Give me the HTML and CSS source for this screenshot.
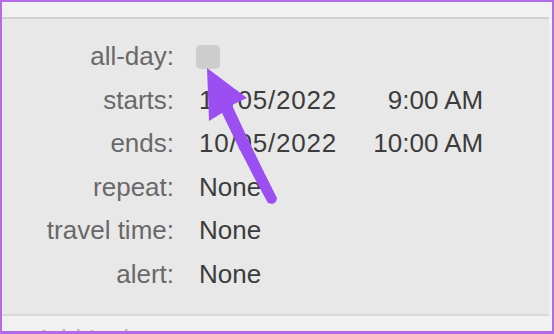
FILE: index.html
```html
<!DOCTYPE html>
<html lang="en">
<head>
    <meta charset="UTF-8">
    <title>Event details</title>
    <link rel="stylesheet" href="styles.css">
</head>
<body>
    <div class="frame">
        <div class="top-strip"></div>

        <div class="panel">
            <div class="label">all-day:</div>
            <div class="value"><span class="checkbox"></span></div>

            <div class="label">starts:</div>
            <div class="value"><span class="date">10/05/2022</span><span class="time">9:00 AM</span></div>

            <div class="label">ends:</div>
            <div class="value"><span class="date">10/05/2022</span><span class="time">10:00 AM</span></div>

            <div class="label">repeat:</div>
            <div class="value">None</div>

            <div class="label">travel time:</div>
            <div class="value">None</div>

            <div class="label">alert:</div>
            <div class="value">None</div>
        </div>

        <div class="bottom-strip">Add Invitees</div>

        <!-- annotation arrow pointing at the all-day checkbox -->
        <svg class="arrow" width="554" height="334" viewBox="0 0 554 334">
            <path d="M207 68 L247 98 L232 105 Q253 151 277 198 Q276 206 268 203 Q243 158 222 113 L209 121 Z" fill="#9b4ff3"/>
        </svg>
    </div>
</body>
</html>
```

FILE: styles.css
```css
body {
    margin: 0;
    font-family: "Liberation Sans", Arial, sans-serif;
}

.frame {
    position: relative;
    width: 554px;
    height: 334px;
    box-sizing: border-box;
    border: 2px solid #b26be4;
    border-bottom-width: 3px;
    background-color: #f2f1f2;
    display: flex;
    flex-direction: column;
    overflow: hidden;
}

.top-strip {
    height: 15px;
}

.panel {
    flex: 1;
    background-color: #e8e8e8;
    border-top: 2px solid #d0d0d0;
    border-bottom: 2px solid #d8d8d8;
    margin-right: 3px;
    padding-top: 16px;
    display: grid;
    grid-template-columns: 172px 1fr;
    grid-auto-rows: 43.5px;
    column-gap: 25px;
    align-items: center;
    font-size: 26px;
}

.label {
    text-align: right;
    color: #696969;
}

.value {
    color: #3c3c3c;
    display: flex;
    align-items: center;
}

.checkbox {
    display: block;
    width: 24px;
    height: 24px;
    margin-left: -3px;
    border-radius: 5px;
    background-color: #cdcdcd;
}

.date {
    letter-spacing: 0.8px;
}

.time {
    width: 146px;
    text-align: right;
}

.bottom-strip {
    height: 15px;
    padding-left: 33px;
    padding-top: 10px;
    box-sizing: border-box;
    font-size: 26px;
    line-height: 1;
    color: #b8b4bc;
    overflow: hidden;
}

.arrow {
    position: absolute;
    left: -2px;
    top: -2px;
}
```
